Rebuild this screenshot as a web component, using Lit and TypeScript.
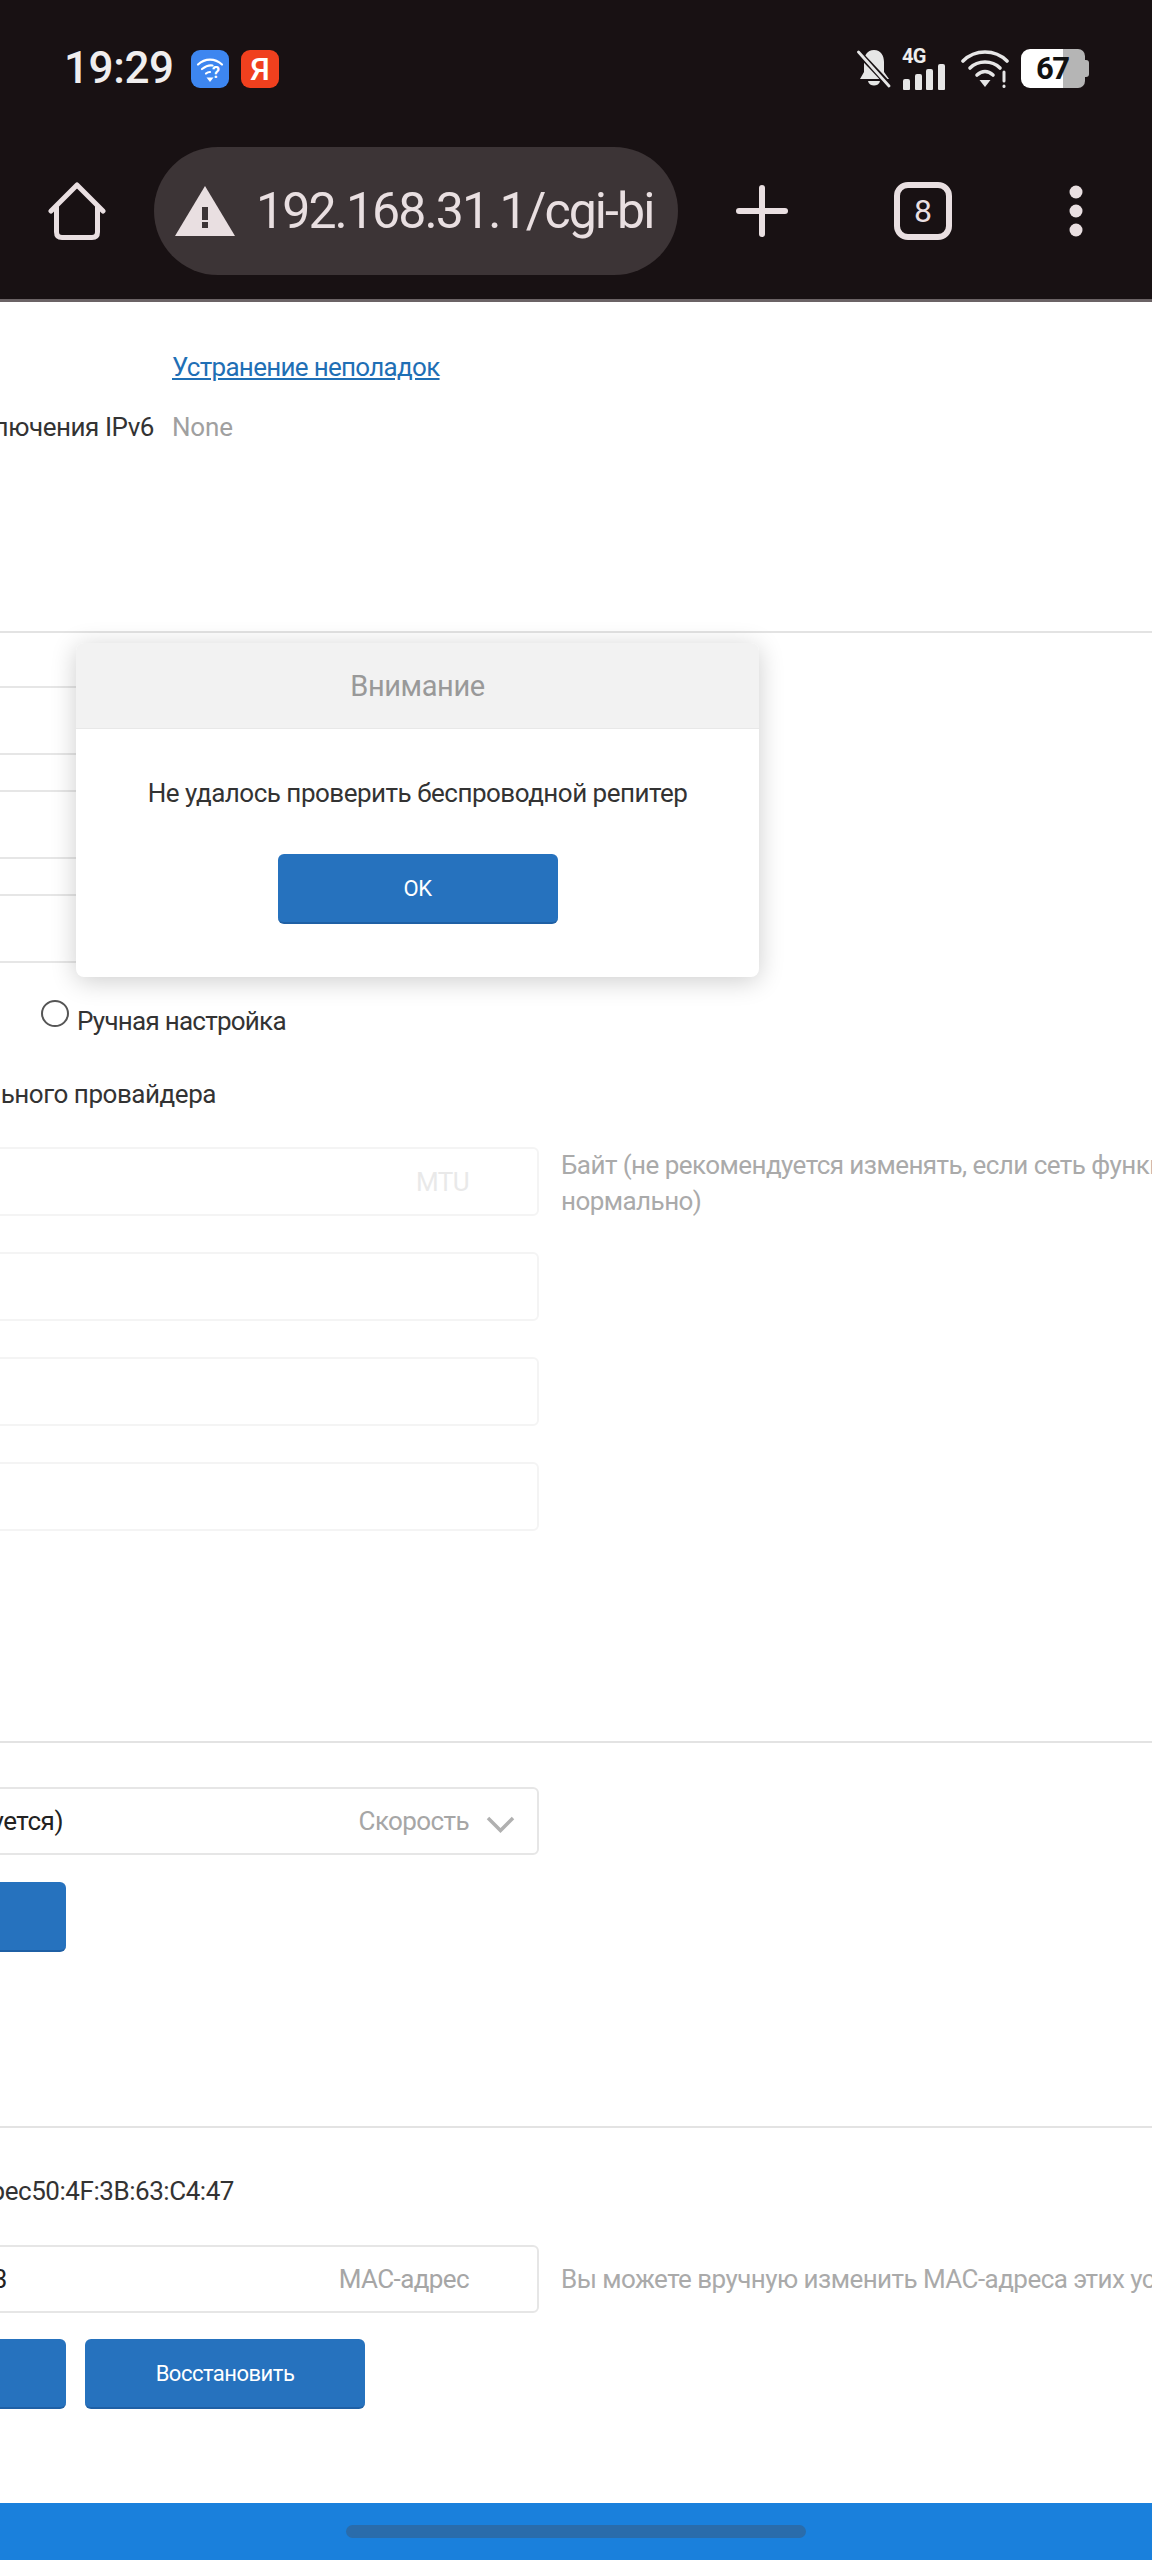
import { LitElement, html, css } from "lit";
import { customElement } from "lit/decorators.js";

@customElement("app-root")
export class AppRoot extends LitElement {
  static styles = css`
    :host { display: block; position: relative; width: 1152px; height: 2560px; overflow: hidden; background: #fff; font-family: Roboto, "Noto Sans", sans-serif; color: #333; font-size: 26px; }
    * { box-sizing: border-box; }
    svg { display: block; flex: none; }
    .chrome { height: 302px; background: #181113; border-bottom: 3px solid #6b6365; display: flex; flex-direction: column; }
    .status { display: flex; align-items: center; height: 39px; margin-top: 49px; padding-left: 64px; }
    .time { width: 109px; color: #f0eeee; font-size: 44px; font-weight: 500; line-height: 39px; letter-spacing: -0.4px; white-space: nowrap; margin-right: 18px; }
    .app { width: 38px; height: 38px; border-radius: 9px; margin-right: 12px; display: flex; align-items: center; justify-content: center; }
    .app.blue { background: #3d86f0; }
    .app.red { background: #f0401e; color: #fff; font-size: 32px; font-weight: 500; line-height: 38px; }
    .sys { margin-left: auto; display: flex; align-items: flex-end; height: 39px; padding-right: 63px; }
    .bell { margin-right: 11px; }
    .signal { width: 46px; height: 39px; margin-right: 13px; display: flex; flex-direction: column; justify-content: space-between; }
    .g { font-size: 20px; font-weight: 700; line-height: 15px; color: #eee; letter-spacing: -0.6px; }
    .bars { display: flex; align-items: flex-end; gap: 4.5px; padding-left: 1px; }
    .bars i { display: block; width: 7px; background: #e6e6e6; border-radius: 2px 2px 1px 1px; }
    .wifi { margin-right: 12px; }
    .batt { position: relative; width: 68px; height: 39px; display: flex; align-items: center; }
    .batt .fill { width: 42px; height: 39px; background: #fff; border-radius: 9px 0 0 9px; }
    .batt .rest { width: 22px; height: 39px; background: #b5b5b5; border-radius: 0 7px 7px 0; }
    .batt .nub { width: 4px; height: 17px; background: #b5b5b5; border-radius: 0 3px 3px 0; }
    .batt b { position: absolute; left: 15px; top: 0; width: 32px; text-align: center; font-size: 31px; line-height: 39px; color: #111; letter-spacing: -1.5px; }
    .toolbar { display: flex; align-items: center; height: 128px; margin-top: 59px; padding-left: 48px; }
    .pill { width: 524px; height: 128px; margin-left: 48px; margin-right: 58px; border-radius: 64px; background: #3c3436; display: flex; align-items: center; padding-left: 21px; overflow: hidden; }
    .url { margin-left: 21px; font-size: 50px; color: #e9dfe1; white-space: nowrap; letter-spacing: -1.9px; line-height: 60px; }
    .plus { margin-right: 106px; }
    .tabs { width: 58px; height: 58px; border: 6px solid #e9dfe1; border-radius: 14px; color: #e9dfe1; font-size: 32px; display: flex; align-items: center; justify-content: center; margin-right: 117px; }
    .line { height: 36px; line-height: 36px; white-space: nowrap; display: flex; }
    .label { width: 154px; flex: none; display: flex; justify-content: flex-end; }
    .link { color: #1f6fb5; text-decoration: underline; margin-left: 172px; letter-spacing: -0.7px; }
    .muted { color: #a0a0a0; }
    .none { margin-left: 18px; letter-spacing: -0.2px; }
    .tight { letter-spacing: -0.45px; }
    .tighter { letter-spacing: -0.75px; }
    hr { border: 0; height: 2px; background: #e3e3e3; margin: 0; }
    .inputs { display: flex; flex-direction: column; }
    .row { display: flex; height: 69px; white-space: nowrap; }
    .input { width: 547px; height: 69px; margin-left: -8px; flex: none; border: 2px solid #e6e6e6; border-radius: 6px; display: flex; align-items: center; justify-content: flex-end; padding-right: 68px; color: #a6a6a6; letter-spacing: -0.6px; }
    .input.off { border-color: #f4f4f4; color: #e9e9e9; }
    .help { margin-left: 22px; line-height: 36px; color: #aaa; letter-spacing: -0.55px; }
    .help.center { align-self: center; }
    .radio { width: 28px; height: 27px; margin: -3px 8px 0 41px; border: 2px solid #555; border-radius: 50%; flex: none; }
    .select { position: relative; }
    .select .val { position: absolute; right: 0; left: 0; top: 0; height: 100%; display: flex; align-items: center; color: #222; }
    .btns { display: flex; gap: 19px; margin-left: -10px; }
    .btn { width: 280px; height: 70px; background: #2672be; border-bottom: 2px solid #1f60a5; border-radius: 6px; color: #fff; font-size: 22px; display: flex; align-items: center; justify-content: center; letter-spacing: -0.5px; }
    .btn.narrow { width: 76px; }
    .footer { height: 57px; background: #1a80dc; display: flex; align-items: center; justify-content: center; }
    .handle { width: 460px; height: 13px; border-radius: 7px; background: #2a6cab; }
    .modal { position: absolute; left: 76px; top: 643px; width: 683px; height: 334px; background: #fff; border-radius: 8px; box-shadow: 0 4px 26px rgba(0,0,0,.2); display: flex; flex-direction: column; align-items: center; overflow: hidden; }
    .mhead { width: 100%; height: 86px; background: #f2f2f2; border-bottom: 1px solid #e8e8e8; display: flex; align-items: center; justify-content: center; font-size: 29px; color: #999; letter-spacing: -0.4px; }
    .msg { margin-top: 46px; line-height: 36px; letter-spacing: -0.5px; color: #333; }
    .mbtn { margin-top: 43px; width: 280px; }
  `;

  render() {
    return html`
      <div class="chrome">
        <div class="status">
          <div class="time">19:29</div>
          <div class="app blue">
            <svg width="28" height="28" viewBox="0 0 28 28" fill="none" stroke="#fff" stroke-width="2.2" stroke-linecap="round">
              <path d="M2 9.500C9 3 19 3 26 9.500" /><path d="M6 14C10.500 10.500 14 10 16.500 10.500" /><path d="M10 18.500C11.500 17.200 13 17 14 17" />
              <path d="M14 27L10.500 22.500H17.500Z" fill="#fff" stroke="none" />
              <text x="20" y="23" text-anchor="middle" font-size="16" font-weight="700" fill="#fff" stroke="none" font-family="Roboto">?</text>
            </svg>
          </div>
          <div class="app red">Я</div>
          <div class="sys">
            <svg class="bell" width="34" height="39" viewBox="0 0 34 39">
              <path d="M17 1C24 1 27 7 27 13V23L32 30H3L7 23V13C7 7 10 1 17 1Z" fill="#e6e6e6" />
              <path d="M11 32H23C22 38 12 38 11 32Z" fill="#e6e6e6" />
              <path d="M1 3L33 37" stroke="#181113" stroke-width="6" />
              <path d="M1.500 3L32 37" stroke="#e6e6e6" stroke-width="2.800" stroke-linecap="round" />
            </svg>
            <div class="signal">
              <div class="g">4G</div>
              <div class="bars"><i style="height:11px"></i><i style="height:16px"></i><i style="height:21px"></i><i style="height:26px"></i></div>
            </div>
            <svg class="wifi" width="48" height="38" viewBox="0 0 48 38" fill="none" stroke="#e6e6e6" stroke-width="3.600" stroke-linecap="round">
              <path d="M2 11C14 -1 34 -1 46 11" /><path d="M9 18C17 10 31 10 39 18" /><path d="M16 25C21 20.500 27 20.500 32 25" />
              <path d="M24 37L18.500 30H29.500Z" fill="#e6e6e6" stroke="none" />
              <path d="M43 22V31" stroke-width="3" /><path d="M43 36V36.500" stroke-width="3" />
            </svg>
            <div class="batt"><div class="fill"></div><div class="rest"></div><div class="nub"></div><b>67</b></div>
          </div>
        </div>
        <div class="toolbar">
          <svg width="58" height="58" viewBox="0 0 58 58" fill="none" stroke="#e9dfe1" stroke-width="5" stroke-linecap="round" stroke-linejoin="round">
            <path d="M3 29L29 3L55 29" /><path d="M8.500 25V50Q8.500 55.500 14 55.500H44Q49.500 55.500 49.500 50V25" />
          </svg>
          <div class="pill">
            <svg width="60" height="50" viewBox="0 0 60 50">
              <path d="M30 0L60 50H0Z" fill="#e9dfe1" />
              <rect x="27" y="21" width="6" height="13" fill="#3c3436" /><rect x="27" y="36" width="6" height="6" fill="#3c3436" />
            </svg>
            <div class="url">192.168.31.1/cgi-bi</div>
          </div>
          <svg class="plus" width="52" height="52" viewBox="0 0 52 52" stroke="#e9dfe1" stroke-width="6" stroke-linecap="round">
            <path d="M3 26H49" /><path d="M26 3V49" />
          </svg>
          <div class="tabs">8</div>
          <svg width="14" height="52" viewBox="0 0 14 52" fill="#e9dfe1"><circle cx="7" cy="7" r="6.500" /><circle cx="7" cy="26" r="6.500" /><circle cx="7" cy="45" r="6.500" /></svg>
        </div>
      </div>

      <div class="line" style="margin-top:47px"><span class="link">Устранение неполадок</span></div>
      <div class="line" style="margin-top:24px">
        <div class="label tight">лючения IPv6</div><span class="muted none">None</span>
      </div>
      <hr style="margin-top:186px" />

      <div class="inputs" style="margin-top:53px;gap:35px">
        <div class="row"><div class="input"></div></div>
        <div class="row"><div class="input"></div></div>
        <div class="row"><div class="input"></div></div>
      </div>
      <div class="line" style="margin-top:40px"><div class="radio"></div><span class="tighter">Ручная настройка</span></div>
      <div class="line" style="margin-top:37px"><div class="label tight" style="width:216px">льного провайдера</div></div>

      <div class="inputs" style="margin-top:35px;gap:36px">
        <div class="row">
          <div class="input off">MTU</div>
          <div class="help">Байт (не рекомендуется изменять, если сеть функционирует<br />нормально)</div>
        </div>
        <div class="row"><div class="input off"></div></div>
        <div class="row"><div class="input off"></div></div>
        <div class="row"><div class="input off"></div></div>
      </div>
      <hr style="margin-top:210px" />

      <div class="row select" style="margin-top:44px;height:68px">
        <div class="input" style="height:68px;padding-right:68px">Скорость</div>
        <div class="val tight"><div class="label" style="width:63px">уется)</div></div>
        <svg style="position:absolute;left:486px;top:29px" width="29" height="17" viewBox="0 0 29 17" fill="none" stroke="#b0b0b0" stroke-width="3.500"><path d="M2 2L14.500 14.500L27 2" /></svg>
      </div>
      <div class="btns" style="margin-top:27px"><div class="btn narrow"></div></div>
      <hr style="margin-top:174px" />

      <div class="line" style="margin-top:45px"><div class="label tight" style="width:234px">рес50:4F:3B:63:C4:47</div></div>
      <div class="row select" style="margin-top:36px;height:68px">
        <div class="input" style="height:68px">МАС-адрес</div>
        <div class="val tight"><div class="label" style="width:7px">3</div></div>
        <div class="help center">Вы можете вручную изменить МАС-адреса этих устройств</div>
      </div>
      <div class="btns" style="margin-top:26px"><div class="btn narrow"></div><div class="btn">Восстановить</div></div>

      <div class="footer" style="margin-top:94px"><div class="handle"></div></div>

      <div class="modal">
        <div class="mhead">Внимание</div>
        <div class="msg">Не удалось проверить беспроводной репитер</div>
        <div class="btn mbtn">OK</div>
      </div>
    `;
  }
}
